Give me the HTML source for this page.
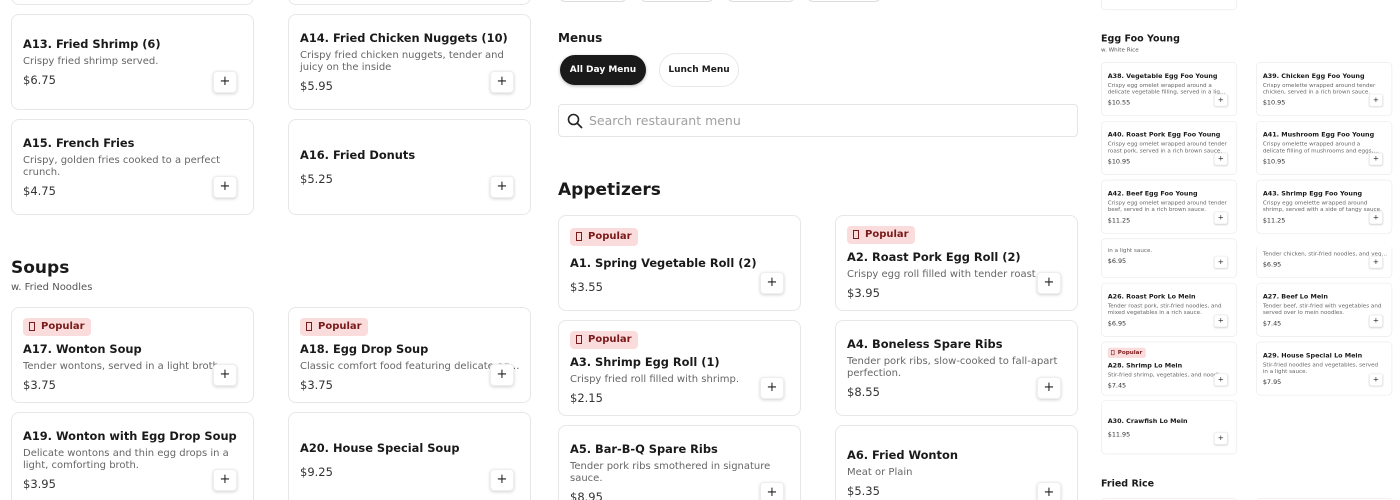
<!DOCTYPE html>
<html><head><meta charset="utf-8">
<style>
*{box-sizing:border-box;margin:0;padding:0}
body{width:1400px;height:500px;overflow:hidden;background:#fff;font-family:"DejaVu Sans","Liberation Sans",sans-serif;color:#1a1a1a;position:relative}
.panel{position:absolute;overflow:hidden}
.card{position:absolute;width:243px;height:96px;border:1px solid #e7e7e7;border-radius:8px;background:#fff}
.c{position:absolute;left:11px;right:10px;top:0;bottom:0;display:flex;flex-direction:column;justify-content:center}
.t{font-weight:bold;font-size:11.4px;line-height:16px;margin-bottom:4px;white-space:nowrap}
.t.nd{margin-bottom:8px}
.d{font-size:10px;line-height:12px;color:#666;width:216px;margin-bottom:4px}
.d.one{white-space:nowrap;overflow:hidden;text-overflow:ellipsis;width:222px}
.d.two{display:-webkit-box;-webkit-line-clamp:2;-webkit-box-orient:vertical;overflow:hidden}
.p{font-size:11.5px;line-height:16px;color:#333}
.b{display:inline-flex;align-items:center;align-self:flex-start;height:18px;padding:0 6px;background:#fbdcdc;border-radius:4px;color:#7a1a1a;font-weight:bold;font-size:10px;margin-bottom:5px}
.b.x{margin-bottom:9px}
.b i{display:inline-block;width:6px;height:9px;border:1px solid #7a1a1a;margin-right:6px}
.plus{position:absolute;top:56px;right:16px;width:24px;height:22px;border-radius:4px;background:#fff;border:1px solid #eee;box-shadow:0 1px 3px rgba(0,0,0,.18);font-size:13px;line-height:20px;text-align:center;color:#222}
.h{position:absolute;font-weight:bold;font-size:17px;line-height:22px}
.s{position:absolute;font-size:10px;color:#555}
.sc{transform:scale(0.56);transform-origin:0 0;position:absolute;left:0;top:0;width:600px;height:900px}
</style></head><body>

<!-- LEFT PANEL -->
<div class="panel" style="left:0;top:0;width:545px;height:500px">
<div class="card" style="left:11px;top:-91px"></div>
<div class="card" style="left:288px;top:-91px"></div>
<div class="card" style="left:11px;top:14px"><div class="c"><div class="t">A13. Fried Shrimp (6)</div><div class="d">Crispy fried shrimp served.</div><div class="p">$6.75</div></div><div class="plus">+</div></div>
<div class="card" style="left:288px;top:14px"><div class="c"><div class="t">A14. Fried Chicken Nuggets (10)</div><div class="d">Crispy fried chicken nuggets, tender and juicy on the inside</div><div class="p">$5.95</div></div><div class="plus">+</div></div>
<div class="card" style="left:11px;top:119px"><div class="c"><div class="t">A15. French Fries</div><div class="d">Crispy, golden fries cooked to a perfect crunch.</div><div class="p">$4.75</div></div><div class="plus">+</div></div>
<div class="card" style="left:288px;top:119px"><div class="c"><div class="t nd">A16. Fried Donuts</div><div class="p">$5.25</div></div><div class="plus">+</div></div>
<div class="h" style="left:11px;top:257px">Soups</div>
<div class="s" style="left:11px;top:282px">w. Fried Noodles</div>
<div class="card" style="left:11px;top:307px"><div class="c"><div class="b"><i></i>Popular</div><div class="t">A17. Wonton Soup</div><div class="d one">Tender wontons, served in a light broth.</div><div class="p">$3.75</div></div><div class="plus">+</div></div>
<div class="card" style="left:288px;top:307px"><div class="c"><div class="b"><i></i>Popular</div><div class="t">A18. Egg Drop Soup</div><div class="d one">Classic comfort food featuring delicate egg drops.</div><div class="p">$3.75</div></div><div class="plus">+</div></div>
<div class="card" style="left:11px;top:412px"><div class="c"><div class="t">A19. Wonton with Egg Drop Soup</div><div class="d">Delicate wontons and thin egg drops in a light, comforting broth.</div><div class="p">$3.95</div></div><div class="plus">+</div></div>
<div class="card" style="left:288px;top:412px"><div class="c"><div class="t nd">A20. House Special Soup</div><div class="p">$9.25</div></div><div class="plus">+</div></div>
</div>

<!-- MIDDLE PANEL -->
<div class="panel" style="left:545px;top:0;width:550px;height:500px">
<div style="position:absolute;left:14px;top:-12px;width:68px;height:14px;border:1px solid #ddd;border-radius:6px"></div>
<div style="position:absolute;left:95px;top:-12px;width:74px;height:14px;border:1px solid #ddd;border-radius:6px"></div>
<div style="position:absolute;left:182px;top:-12px;width:68px;height:14px;border:1px solid #ddd;border-radius:6px"></div>
<div style="position:absolute;left:262px;top:-12px;width:74px;height:14px;border:1px solid #ddd;border-radius:6px"></div>
<div style="position:absolute;left:13px;top:31px;font-weight:bold;font-size:12px">Menus</div>
<div style="position:absolute;left:15px;top:55px;width:86px;height:30px;border-radius:15px;background:#1a1a1a;color:#fff;font-weight:bold;font-size:9px;line-height:30px;text-align:center;box-shadow:0 1px 3px rgba(0,0,0,.3)">All Day Menu</div>
<div style="position:absolute;left:114px;top:53px;width:80px;height:34px;border-radius:17px;border:1px solid #e8e8e8;color:#1a1a1a;font-weight:bold;font-size:9px;line-height:32px;text-align:center">Lunch Menu</div>
<div style="position:absolute;left:13px;top:104px;width:520px;height:33px;border:1px solid #e5e5e5;border-radius:4px">
<svg style="position:absolute;left:8px;top:8px" width="16" height="16" viewBox="0 0 16 16"><circle cx="6.5" cy="6.5" r="5" fill="none" stroke="#222" stroke-width="1.6"/><path d="M10.2 10.2L14.5 14.5" stroke="#222" stroke-width="1.7" stroke-linecap="round"/></svg>
<div style="position:absolute;left:30px;top:8px;font-size:12.5px;color:#a0a0a0">Search restaurant menu</div>
</div>
<div class="h" style="left:13px;top:179px">Appetizers</div>
<div class="card" style="left:13px;top:215px"><div class="c"><div class="b x" style="margin-top:-4px"><i></i>Popular</div><div class="t nd">A1. Spring Vegetable Roll (2)</div><div class="p">$3.55</div></div><div class="plus">+</div></div>
<div class="card" style="left:290px;top:215px"><div class="c"><div class="b"><i></i>Popular</div><div class="t">A2. Roast Pork Egg Roll (2)</div><div class="d one" style="width:190px;text-overflow:clip">Crispy egg roll filled with tender roast pork.</div><div class="p">$3.95</div></div><div class="plus">+</div></div>
<div class="card" style="left:13px;top:320px"><div class="c"><div class="b"><i></i>Popular</div><div class="t">A3. Shrimp Egg Roll (1)</div><div class="d one">Crispy fried roll filled with shrimp.</div><div class="p">$2.15</div></div><div class="plus">+</div></div>
<div class="card" style="left:290px;top:320px"><div class="c"><div class="t">A4. Boneless Spare Ribs</div><div class="d">Tender pork ribs, slow-cooked to fall-apart perfection.</div><div class="p">$8.55</div></div><div class="plus">+</div></div>
<div class="card" style="left:13px;top:425px"><div class="c"><div class="t">A5. Bar-B-Q Spare Ribs</div><div class="d">Tender pork ribs smothered in signature sauce.</div><div class="p">$8.95</div></div><div class="plus">+</div></div>
<div class="card" style="left:290px;top:425px"><div class="c"><div class="t">A6. Fried Wonton</div><div class="d">Meat or Plain</div><div class="p">$5.35</div></div><div class="plus">+</div></div>
</div>

<!-- RIGHT PANEL TOP -->
<div class="panel" style="left:1101px;top:0;width:299px;height:247px">
<div class="sc">
<div class="card" style="left:0;top:-78px"></div>
<div class="h" style="left:0;top:58px">Egg Foo Young</div>
<div class="s" style="left:0;top:84px">w. White Rice</div>
<div class="card" style="left:0;top:111px"><div class="c"><div class="t">A38. Vegetable Egg Foo Young</div><div class="d two">Crispy egg omelet wrapped around a delicate vegetable filling, served in a light brown sauce.</div><div class="p">$10.55</div></div><div class="plus">+</div></div>
<div class="card" style="left:277px;top:111px"><div class="c"><div class="t">A39. Chicken Egg Foo Young</div><div class="d two">Crispy omelette wrapped around tender chicken, served in a rich brown sauce.</div><div class="p">$10.95</div></div><div class="plus">+</div></div>
<div class="card" style="left:0;top:216px"><div class="c"><div class="t">A40. Roast Pork Egg Foo Young</div><div class="d two">Crispy egg omelet wrapped around tender roast pork, served in a rich brown sauce.</div><div class="p">$10.95</div></div><div class="plus">+</div></div>
<div class="card" style="left:277px;top:216px"><div class="c"><div class="t">A41. Mushroom Egg Foo Young</div><div class="d two">Crispy omelette wrapped around a delicate filling of mushrooms and eggs, served with brown sauce.</div><div class="p">$10.95</div></div><div class="plus">+</div></div>
<div class="card" style="left:0;top:321px"><div class="c"><div class="t">A42. Beef Egg Foo Young</div><div class="d two">Crispy egg omelet wrapped around tender beef, served in a rich brown sauce.</div><div class="p">$11.25</div></div><div class="plus">+</div></div>
<div class="card" style="left:277px;top:321px"><div class="c"><div class="t">A43. Shrimp Egg Foo Young</div><div class="d two">Crispy egg omelette wrapped around shrimp, served with a side of tangy sauce.</div><div class="p">$11.25</div></div><div class="plus">+</div></div>
<div class="card" style="left:0;top:426px"><div class="c"><div class="t">A44. House Special Egg Foo Young</div><div class="d two">Crispy egg omelet with a mix of meats and shrimp.</div><div class="p">$11.95</div></div><div class="plus">+</div></div>
</div>
</div>

<!-- RIGHT PANEL BOTTOM -->
<div class="panel" style="left:1101px;top:247px;width:299px;height:253px">
<div class="sc">
<div class="card" style="left:0;top:-41px"><div class="c"><div class="t">A24. Vegetable Lo Mein</div><div class="d">in a light sauce.</div><div class="p">$6.95</div></div><div class="plus">+</div></div>
<div class="card" style="left:277px;top:-41px"><div class="c" style="top:12px"><div class="t">A25. Chicken Lo Mein</div><div class="d one">Tender chicken, stir-fried noodles, and vegetables.</div><div class="p">$6.95</div></div><div class="plus">+</div></div>
<div class="card" style="left:0;top:64px"><div class="c"><div class="t">A26. Roast Pork Lo Mein</div><div class="d two">Tender roast pork, stir-fried noodles, and mixed vegetables in a rich sauce.</div><div class="p">$6.95</div></div><div class="plus">+</div></div>
<div class="card" style="left:277px;top:64px"><div class="c"><div class="t">A27. Beef Lo Mein</div><div class="d two">Tender beef, stir-fried with vegetables and served over lo mein noodles.</div><div class="p">$7.45</div></div><div class="plus">+</div></div>
<div class="card" style="left:0;top:169px"><div class="c"><div class="b"><i></i>Popular</div><div class="t">A28. Shrimp Lo Mein</div><div class="d one">Stir-fried shrimp, vegetables, and noodles.</div><div class="p">$7.45</div></div><div class="plus">+</div></div>
<div class="card" style="left:277px;top:169px"><div class="c"><div class="t">A29. House Special Lo Mein</div><div class="d two">Stir-fried noodles and vegetables, served in a light sauce.</div><div class="p">$7.95</div></div><div class="plus">+</div></div>
<div class="card" style="left:0;top:274px"><div class="c"><div class="t nd">A30. Crawfish Lo Mein</div><div class="p">$11.95</div></div><div class="plus">+</div></div>
<div class="h" style="left:0;top:412px">Fried Rice</div>
<div class="card" style="left:0;top:448px"></div>
<div class="card" style="left:277px;top:448px"></div>
</div>
</div>

</body></html>
